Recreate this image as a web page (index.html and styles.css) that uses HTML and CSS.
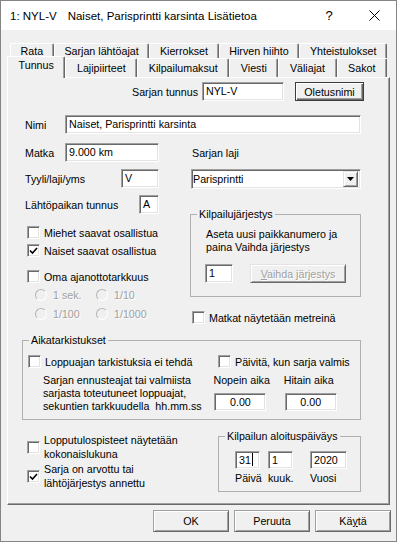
FILE: index.html
```html
<!DOCTYPE html>
<html>
<head>
    <title>1: NYL-V Naiset, Parisprintti karsinta Lisätietoa</title>
    <link rel="stylesheet" href="styles.css">
</head>
<body>
    <div class="dialog">
        <div class="titlebar">
            <span class="title">1: NYL-V</span>
            <span class="title name">Naiset, Parisprintti karsinta Lisätietoa</span>
            <span class="help">?</span>
            <span class="close">
                <svg width="11" height="11" viewBox="0 0 11 11"><path d="M0.5 0.5 L10.5 10.5 M10.5 0.5 L0.5 10.5" stroke="#000" stroke-width="1"/></svg>
            </span>
        </div>

        <div class="tabs">
            <div class="tabrow back">
                <div class="tab">Rata</div>
                <div class="tab">Sarjan lähtöajat</div>
                <div class="tab">Kierrokset</div>
                <div class="tab">Hirven hiihto</div>
                <div class="tab">Yhteistulokset</div>
            </div>
            <div class="tabrow front">
                <div class="tab sel">Tunnus</div>
                <div class="tab">Lajipiirteet</div>
                <div class="tab">Kilpailumaksut</div>
                <div class="tab">Viesti</div>
                <div class="tab">Väliajat</div>
                <div class="tab">Sakot</div>
            </div>
        </div>

        <div class="panel">
            <div class="row row-code">
                <span>Sarjan tunnus</span>
                <div class="edit code">NYL-V</div>
                <button class="btn default">Oletusnimi</button>
            </div>

            <div class="row row-name">
                <span class="lbl-name">Nimi</span>
                <div class="edit wide">Naiset, Parisprintti karsinta</div>
            </div>

            <div class="cols">
                <div class="col-left">
                    <div class="field">
                        <span>Matka</span>
                        <div class="edit w-matka">9.000 km</div>
                    </div>
                    <div class="field">
                        <span>Tyyli/laji/yms</span>
                        <div class="edit w-tyyli">V</div>
                    </div>
                    <div class="field">
                        <span>Lähtöpaikan tunnus</span>
                        <div class="edit w-paikka">A</div>
                    </div>

                    <div class="check gap-big"><span class="cb"></span>Miehet saavat osallistua</div>
                    <div class="check gap-small"><span class="cb"><svg width="9" height="8" viewBox="0 0 9 8"><path d="M1 3.5 L3.5 6 L8 1" fill="none" stroke="#000" stroke-width="1.6"/></svg></span>Naiset saavat osallistua</div>
                    <div class="check gap-big"><span class="cb"></span>Oma ajanottotarkkuus</div>

                    <div class="radios">
                        <div class="radio"><span class="rb"></span>1 sek.</div>
                        <div class="radio"><span class="rb"></span>1/10</div>
                        <div class="radio"><span class="rb"></span>1/100</div>
                        <div class="radio"><span class="rb"></span>1/1000</div>
                    </div>
                </div>

                <div class="col-right">
                    <div class="lbl-top">Sarjan laji</div>
                    <div class="combo">
                        <span class="combo-text">Parisprintti</span>
                        <span class="drop"><svg width="7" height="4" viewBox="0 0 7 4"><path d="M0 0 H7 L3.5 4 Z" fill="#000"/></svg></span>
                    </div>

                    <fieldset class="group order">
                        <legend>Kilpailujärjestys</legend>
                        <div class="order-body">
                            <p class="note">Aseta uusi paikkanumero ja<br>paina Vaihda järjestys</p>
                            <div class="row order-row">
                                <div class="edit w-place">1</div>
                                <button class="btn disabled"><u>V</u>aihda järjestys</button>
                            </div>
                        </div>
                    </fieldset>

                    <div class="check metres"><span class="cb"></span>Matkat näytetään metreinä</div>
                </div>
            </div>

            <fieldset class="group times">
                <legend>Aikatarkistukset</legend>
                <div class="times-top">
                    <div class="check first"><span class="cb"></span>Loppuajan tarkistuksia ei tehdä</div>
                    <div class="check"><span class="cb"></span>Päivitä, kun sarja valmis</div>
                </div>
                <div class="times-main">
                    <p class="times-text">Sarjan ennusteajat tai valmiista<br>sarjasta toteutuneet loppuajat,<br>sekuntien tarkkuudella &nbsp;hh.mm.ss</p>
                    <div class="limit">
                        <span>Nopein aika</span>
                        <div class="edit num">0.00</div>
                    </div>
                    <div class="limit">
                        <span>Hitain aika</span>
                        <div class="edit num">0.00</div>
                    </div>
                </div>
            </fieldset>

            <div class="bottom">
                <div class="bottom-left">
                    <div class="check two-line"><span class="cb"></span><span>Lopputulospisteet näytetään<br>kokonaislukuna</span></div>
                    <div class="check two-line second"><span class="cb"><svg width="9" height="8" viewBox="0 0 9 8"><path d="M1 3.5 L3.5 6 L8 1" fill="none" stroke="#000" stroke-width="1.6"/></svg></span><span>Sarja on arvottu tai<br>lähtöjärjestys annettu</span></div>
                </div>

                <fieldset class="group start">
                    <legend>Kilpailun aloituspäiväys</legend>
                    <div class="date">
                        <div class="edit w-day">31<span class="caret"></span></div>
                        <div class="edit w-day">1</div>
                        <div class="edit w-year">2020</div>
                        <span>Päivä</span>
                        <span>kuuk.</span>
                        <span>Vuosi</span>
                    </div>
                </fieldset>
            </div>
        </div>

        <div class="buttons">
            <button class="btn">OK</button>
            <button class="btn">Peruuta</button>
            <button class="btn">Kä<u>y</u>tä</button>
        </div>
    </div>
</body>
</html>
```

FILE: styles.css
```css
body {
    margin: 0;
    font-family: "Liberation Sans", Arial, sans-serif;
    font-size: 10.7px;
    color: #000;
}
p {
    margin: 0;
}
.dialog {
    width: 397px;
    height: 542px;
    box-sizing: border-box;
    border: 1px solid #858585;
    background-color: #f0f0f0;
}

/* title bar */
.titlebar {
    height: 29px;
    display: flex;
    align-items: center;
    padding-left: 9px;
    background-color: #fff;
    font-size: 11.5px;
}
.title.name {
    margin-left: 11px;
}
.help {
    margin-left: auto;
    width: 46px;
    text-align: center;
    font-size: 13px;
}
.close {
    width: 44px;
    display: flex;
    justify-content: center;
}

/* tabs */
.tabs {
    margin-top: 13px;
}
.tabrow {
    display: flex;
}
.tabrow.back {
    height: 15px;
    padding: 0 9px 0 9px;
}
.tabrow.front {
    height: 19px;
    padding: 0 9px 0 8px;
}
.tab {
    flex: 1 1 auto;
    padding: 0 6px;
    box-sizing: border-box;
    text-align: center;
    white-space: nowrap;
    border-top: 1px solid #fff;
    border-left: 1px solid #fff;
    border-right: 1px solid #696969;
    border-radius: 2px 2px 0 0;
    box-shadow: inset -1px 0 #a0a0a0;
}
.back .tab {
    line-height: 14px;
}
.front .tab {
    line-height: 18px;
}
.tab.sel {
    position: relative;
    z-index: 1;
    height: 22px;
    margin: -2px 0 -1px -2px;
    line-height: 17px;
    background-color: #f0f0f0;
}

/* page */
.panel {
    width: 383px;
    height: 428px;
    margin-left: 6px;
    box-sizing: border-box;
    border: 1px solid;
    border-color: #fff #696969 #696969 #fff;
    box-shadow: inset -1px -1px #a0a0a0;
}
.row {
    display: flex;
    align-items: center;
}

/* sunken edit box */
.edit {
    height: 19px;
    box-sizing: border-box;
    padding: 0 3px;
    line-height: 17px;
    background-color: #fff;
    border: 1px solid;
    border-color: #a0a0a0 #fff #fff #a0a0a0;
    box-shadow: inset 1px 1px #696969, inset -1px -1px #e3e3e3;
    white-space: nowrap;
}
.caret {
    display: inline-block;
    width: 1px;
    height: 13px;
    margin-left: 1px;
    vertical-align: -2px;
    background-color: #000;
}

/* raised buttons */
.btn {
    height: 19px;
    padding: 0;
    font: inherit;
    color: #000;
    background-color: #f0f0f0;
    border: 1px solid;
    border-color: #a0a0a0 #696969 #696969 #a0a0a0;
    box-shadow: inset 1px 1px #fff, inset -1px -1px #a0a0a0;
}
.btn.default {
    border-color: #3c3c3c;
    box-shadow: inset 1px 1px #fff, inset -1px -1px #696969, inset -2px -2px #a0a0a0;
}
.btn.disabled {
    color: #a0a0a0;
    text-shadow: 1px 1px #fff;
    border-color: #e3e3e3 #696969 #696969 #e3e3e3;
}

.row-code {
    height: 19px;
    margin-top: 4px;
    padding-right: 25px;
    justify-content: flex-end;
}
.edit.code {
    width: 82px;
    margin: 0 11px 0 4px;
}
.row-code .btn {
    width: 69px;
}
.row-name {
    height: 19px;
    margin-top: 14px;
    padding-left: 17px;
}
.lbl-name {
    width: 40px;
}
.edit.wide {
    width: 296px;
}

/* two columns */
.cols {
    display: flex;
    margin-top: 9px;
    padding-left: 17px;
}
.col-left {
    width: 165px;
}
.col-right {
    width: 171px;
}
.field {
    width: 134px;
    height: 19px;
    display: flex;
    align-items: center;
}
.field + .field {
    margin-top: 7px;
}
.field .edit {
    margin-left: auto;
}
.w-matka {
    width: 94px;
}
.w-tyyli {
    width: 38px;
}
.w-paikka {
    width: 20px;
}

/* check boxes */
.check {
    display: flex;
    align-items: center;
    height: 15px;
    white-space: nowrap;
}
.cb {
    flex: none;
    width: 13px;
    height: 13px;
    margin-right: 4px;
    box-sizing: border-box;
    display: flex;
    align-items: center;
    justify-content: center;
    background-color: #fff;
    border: 1px solid;
    border-color: #a0a0a0 #fff #fff #a0a0a0;
    box-shadow: inset 1px 1px #696969, inset -1px -1px #e3e3e3;
}
.col-left .check {
    padding-left: 2px;
}
.gap-big {
    margin-top: 11px;
}
.gap-small {
    margin-top: 3px;
}

/* disabled radio buttons */
.radios {
    display: grid;
    grid-template-columns: 61px 61px;
    row-gap: 3px;
    margin-top: 3px;
    padding-left: 10px;
    color: #a0a0a0;
    text-shadow: 1px 1px #fff;
}
.radio {
    display: flex;
    align-items: center;
    height: 16px;
}
.rb {
    width: 12px;
    height: 12px;
    margin-right: 6px;
    box-sizing: border-box;
    border-radius: 50%;
    border: 1px solid;
    border-color: #b4b4b4 #fff #fff #b4b4b4;
}

/* right column */
.lbl-top {
    height: 19px;
    display: flex;
    align-items: center;
    padding-left: 2px;
}
.combo {
    width: 170px;
    height: 20px;
    margin: 7px 0 0 1px;
    box-sizing: border-box;
    padding: 2px 2px 2px 1px;
    display: flex;
    align-items: center;
    background-color: #fff;
    border: 1px solid;
    border-color: #a0a0a0 #fff #fff #a0a0a0;
    box-shadow: inset 1px 1px #696969, inset -1px -1px #e3e3e3;
}
.combo-text {
    flex: 1;
}
.drop {
    width: 15px;
    height: 16px;
    box-sizing: border-box;
    display: flex;
    align-items: center;
    justify-content: center;
    background-color: #f0f0f0;
    border: 1px solid;
    border-color: #e3e3e3 #696969 #696969 #e3e3e3;
    box-shadow: inset 1px 1px #fff, inset -1px -1px #a0a0a0;
}

/* group boxes */
.group {
    margin: 0;
    padding: 0 6px;
    box-sizing: border-box;
    border: 1px solid #b0b0b0;
    min-width: 0;
}
.group legend {
    padding: 0 2px;
    line-height: 14px;
}
.order {
    width: 171px;
    margin-top: 18px;
}
.order-body {
    padding: 7px 0 13px 8px;
}
.note {
    line-height: 13px;
    padding-left: 1px;
}
.order-row {
    margin-top: 10px;
}
.w-place {
    width: 28px;
}
.order-row .btn {
    width: 96px;
    margin-left: 17px;
}
.check.metres {
    margin-top: 13px;
    padding-left: 2px;
}

.times {
    width: 339px;
    margin: 8px 0 0 14px;
}
.times-top {
    display: flex;
    margin: 7px 0 0 -1px;
}
.times-top .first {
    width: 190px;
}
.times-main {
    display: flex;
    margin-top: 5px;
    padding-bottom: 6px;
}
.times-text {
    width: 177px;
    padding-left: 14px;
    line-height: 13px;
}
.limit {
    width: 73px;
    line-height: 13px;
}
.edit.num {
    height: 18px;
    margin: 6px 0 0 1px;
    width: 52px;
    text-align: center;
    line-height: 16px;
}

/* bottom part */
.bottom {
    display: flex;
    margin-top: 9px;
}
.bottom-left {
    width: 210px;
    box-sizing: border-box;
    padding-left: 19px;
}
.check.two-line {
    height: auto;
    margin-top: 5px;
    line-height: 13.5px;
}
.check.two-line.second {
    margin-top: 2px;
}
.start {
    width: 143px;
}
.date {
    display: grid;
    grid-template-columns: 33px 42px auto;
    padding: 8px 0 6px 10px;
    line-height: 13px;
}
.date .edit {
    height: 18px;
    line-height: 16px;
    margin-bottom: 3px;
}
.w-day {
    width: 25px;
}
.w-year {
    width: 37px;
}

/* dialog buttons */
.buttons {
    display: flex;
    justify-content: flex-end;
    gap: 5px;
    margin-top: 5px;
    padding-right: 5px;
}
.buttons .btn {
    width: 76px;
    height: 22px;
}
```
